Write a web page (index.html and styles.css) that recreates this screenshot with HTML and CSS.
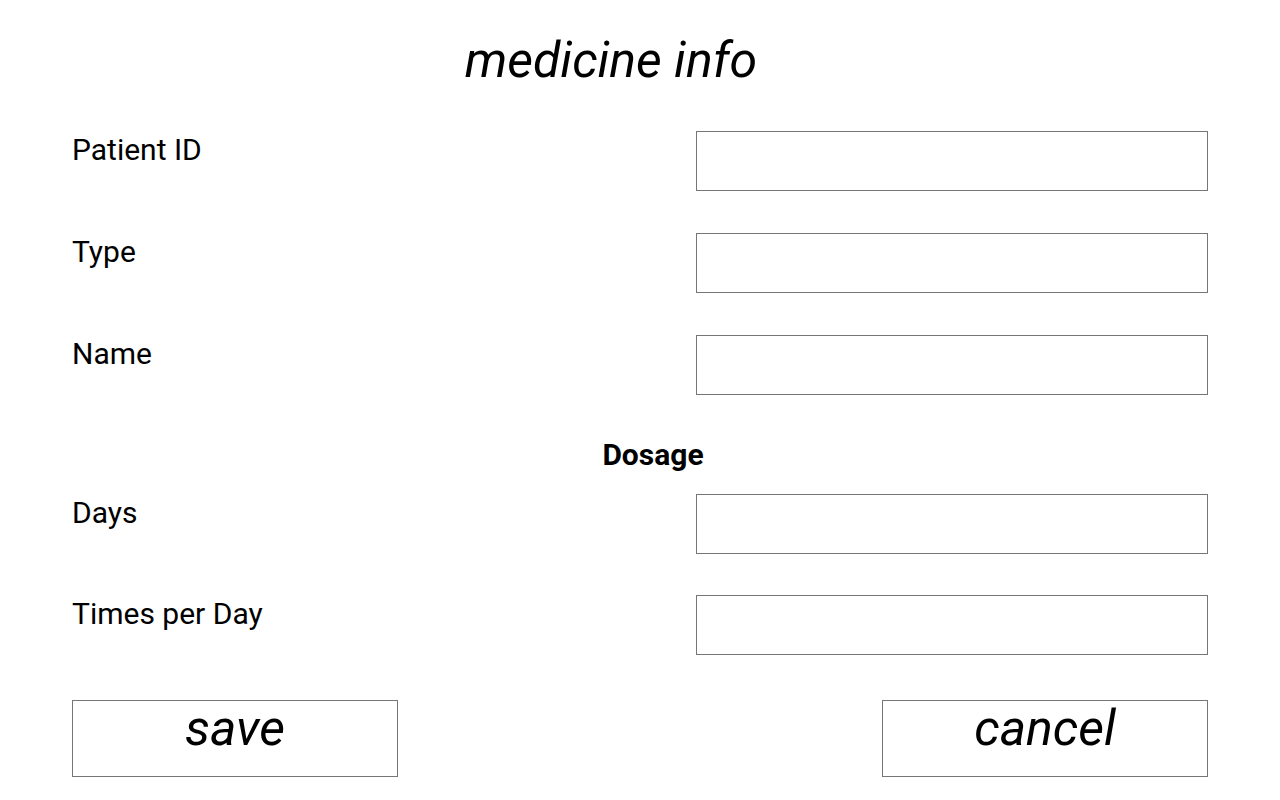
FILE: index.html
```html
<!DOCTYPE html>
<html lang="en">
<head>
  <meta charset="UTF-8" /><meta name="viewport" content="width=device-width, initial-scale=1.0"/>
  <title>medicine info</title>
  <link rel="stylesheet" href="styles.css">
</head>
<body>
<h1 class="title">medicine info</h1>

<form class="med-form" onsubmit="return false;">
  <div class="row"><label for="patientId">Patient ID</label><input type="text" id="patientId"></div>
  <div class="row"><label for="type">Type</label><input type="text" id="type"></div>
  <div class="row"><label for="name">Name</label><input type="text" id="name"></div>

  <div class="section">Dosage</div>
  <div class="row row-tight"><label for="days">Days</label><input type="number" id="days"></div>
  <div class="row"><label for="times">Times per Day</label><input type="number" id="times"></div>

  <div class="actions">
    <button type="submit" class="btn">save</button>
    <button type="button" class="btn">cancel</button>
  </div>
</form>
</body>
</html>
```

FILE: styles.css
```css
body {
  margin: 0;
  font-family: Roboto, "Noto Sans", sans-serif;
  background: #fff;
  color: #000;
}
.title { margin: 31px 0 0; padding-right: 58px; text-align: center; font-size: 50px; font-weight: 400; font-style: italic; line-height: 58px; }
/* Form */
.med-form { padding: 42px 72px 0; }
.row { display: flex; justify-content: space-between; align-items: flex-start; margin-bottom: 42px; }
.row-tight { margin-bottom: 41px; }
.row label { font-size: 30px; line-height: 35px; padding-top: 1px; }
.row input { width: 512px; height: 60px; box-sizing: border-box; border: 1px solid #767676; border-radius: 0; padding: 0 10px; font: 24px Roboto, sans-serif; outline: none; }
.section { padding-left: 26px; text-align: center; font-size: 30px; font-weight: 700; line-height: 35px; margin: 0 0 22px; }
/* Buttons */
.actions { display: flex; justify-content: space-between; margin-top: 45px; }
.btn { width: 326px; height: 77px; box-sizing: border-box; background: #fff; border: 1px solid #767676; border-radius: 0; padding: 0; font-family: Roboto, sans-serif; font-size: 50px; font-style: italic; line-height: 54px; color: #000; display: flex; justify-content: center; align-items: flex-start; cursor: pointer; }
```
